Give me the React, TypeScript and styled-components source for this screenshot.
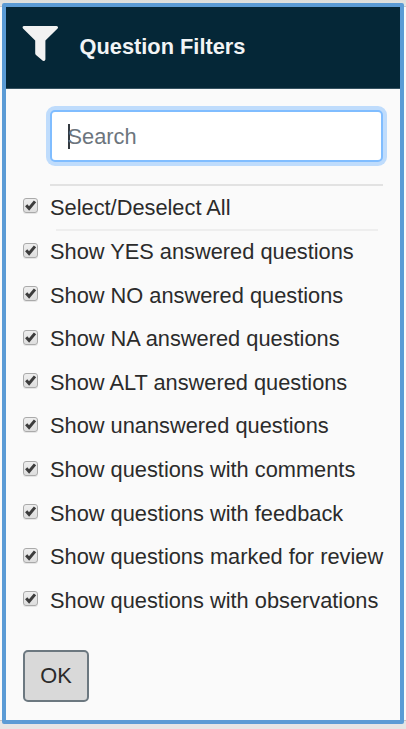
import React, { useState } from "react";
import styled, { createGlobalStyle } from "styled-components";

const GlobalStyle = createGlobalStyle`
  *, *::before, *::after { box-sizing: border-box; }
  body {
    margin: 0;
    font-family: "Liberation Sans", Arial, sans-serif;
    color: #2b2b2b;
  }
`;

const Page = styled.div`
  height: 729px;
  padding: 3px 2px 5px;
  background: linear-gradient(
    #dededb 0, #e6e6e4 6px, #c9c9c9 6px, #c9c9c9 7px,
    #fafafa 7px, #fafafa 720px, #c4c4c4 720px, #c4c4c4 721px, #e5e5e5 721px
  );
`;

const Panel = styled.section`
  display: flex;
  flex-direction: column;
  height: 721px;
  border: 4px solid #5b9bd5;
  border-radius: 2px;
  background: #fafafa;
`;

const Header = styled.header`
  display: flex;
  flex: none;
  height: 82px;
  padding: 18px 0 0 16px;
  background: #052737;
  border-bottom: 1px solid #365260;
`;

const FunnelIcon = styled.svg`
  flex: none;
  width: 36px;
  height: 36px;
  fill: #f2f2f2;
`;

const Title = styled.h1`
  margin: 9px 0 0 21.5px;
  font-size: 21.8px;
  line-height: 26px;
  font-weight: 700;
  color: #f2f4f5;
  white-space: nowrap;
`;

const SearchBox = styled.label`
  display: flex;
  flex: none;
  align-items: center;
  width: 333px;
  height: 52px;
  margin: 21px 0 0 44px;
  padding: 1px 0 0 16px;
  border: 2px solid #80bdff;
  border-radius: 5px;
  background: #fff;
  box-shadow: 0 0 0 4px #bfdcfc;
`;

const Caret = styled.span`
  width: 1.5px;
  height: 25px;
  margin-right: -2px;
  background: #343a40;
`;

const SearchInput = styled.input`
  width: 290px;
  padding: 1px 0 0;
  border: 0;
  outline: 0;
  background: transparent;
  font: 21.8px "Liberation Sans", Arial, sans-serif;
  color: #495057;
  &::placeholder { color: #6c757d; opacity: 1; }
`;

const Rule = styled.hr<{ $inset?: boolean }>`
  flex: none;
  width: ${(p) => (p.$inset ? 322 : 333)}px;
  height: 2px;
  margin: 0 0 0 ${(p) => (p.$inset ? 50 : 44)}px;
  border: 0;
  background: ${(p) => (p.$inset ? "#eeeeee" : "#e2e2e2")};
`;

const List = styled.div`
  display: flex;
  flex-direction: column;
`;

const FilterGroup = styled.div`
  display: flex;
  flex-direction: column;
  margin-top: -0.7px;
`;

const Row = styled.label<{ $height?: number }>`
  display: flex;
  align-items: center;
  height: ${(p) => p.$height ?? 43.6}px;
  padding-left: 17px;
  font-size: 21.8px;
  line-height: 26px;
  white-space: nowrap;
`;

const Check = styled.input`
  position: absolute;
  opacity: 0;
  width: 15px;
  height: 15px;
  margin: 0;
`;

const CheckFace = styled.span`
  display: flex;
  flex: none;
  width: 15px;
  height: 15px;
  margin: -4px 12px 0 0;
  border: 1px solid #aaa;
  border-radius: 3px;
  background: linear-gradient(#eee, #dedede);
  box-shadow: 0 1px 0 #e5e5e5;
  svg { width: 13px; height: 13px; overflow: visible; }
`;

const OkButton = styled.button`
  flex: none;
  width: 66px;
  height: 52px;
  margin: 0 0 0 17px;
  padding: 0;
  border: 2px solid #6c7880;
  border-radius: 5px;
  background: #d9d9d9;
  color: #2b2b2b;
  font: 21.8px "Liberation Sans", Arial, sans-serif;
`;

const Spacer = styled.div<{ $size: number }>`
  flex: none;
  height: ${(p) => p.$size}px;
`;

const filters = [
  "Show YES answered questions",
  "Show NO answered questions",
  "Show NA answered questions",
  "Show ALT answered questions",
  "Show unanswered questions",
  "Show questions with comments",
  "Show questions with feedback",
  "Show questions marked for review",
  "Show questions with observations",
];

type FilterProps = {
  label: string;
  checked: boolean;
  height?: number;
  onToggle: () => void;
};

function Filter({ label, checked, height, onToggle }: FilterProps) {
  return (
    <Row $height={height}>
      <Check type="checkbox" checked={checked} onChange={onToggle} />
      <CheckFace>
        {checked && (
          <svg viewBox="0 0 13 13">
            <path d="M2.2 6.3 L5.1 9.5 L11 2.4" fill="none" stroke="#3c3c3c" strokeWidth="3" />
          </svg>
        )}
      </CheckFace>
      {label}
    </Row>
  );
}

export default function App() {
  const [selected, setSelected] = useState(filters);
  const all = selected.length === filters.length;
  const toggle = (name: string) =>
    setSelected((s) => (s.includes(name) ? s.filter((n) => n !== name) : [...s, name]));

  return (
    <Page>
      <GlobalStyle />
      <Panel>
        <Header>
          <FunnelIcon viewBox="0 0 36 36">
            <path d="M1.8 1 H34.5 Q36.8 1.5 35.6 3.4 L23.4 15.4 V34.4 Q22.8 36.3 20.8 35.8 L14 30 Q13.2 29.3 13.2 28.3 V15.4 L1 3.4 Q-.2 1.5 1.8 1Z" />
          </FunnelIcon>
          <Title>Question Filters</Title>
        </Header>
        <SearchBox>
          <Caret />
          <SearchInput placeholder="Search" />
        </SearchBox>
        <Spacer $size={22} />
        <Rule />
        <List>
          <Filter
            label="Select/Deselect All"
            checked={all}
            height={43}
            onToggle={() => setSelected(all ? [] : filters)}
          />
          <Rule $inset />
          <FilterGroup>
            {filters.map((name) => (
              <Filter
                key={name}
                label={name}
                checked={selected.includes(name)}
                onToggle={() => toggle(name)}
              />
            ))}
          </FilterGroup>
        </List>
        <Spacer $size={27.3} />
        <OkButton type="button">OK</OkButton>
      </Panel>
    </Page>
  );
}
